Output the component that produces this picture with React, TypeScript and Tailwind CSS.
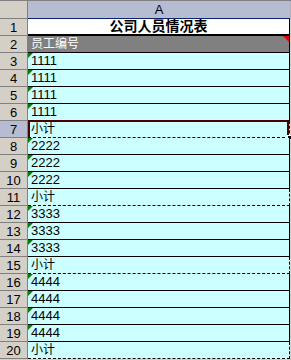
import React from "react";

type Row = { n: number; text: string; kind: "id" | "sub" };

const rows: Row[] = [
  { n: 3, text: "1111", kind: "id" },
  { n: 4, text: "1111", kind: "id" },
  { n: 5, text: "1111", kind: "id" },
  { n: 6, text: "1111", kind: "id" },
  { n: 7, text: "小计", kind: "sub" },
  { n: 8, text: "2222", kind: "id" },
  { n: 9, text: "2222", kind: "id" },
  { n: 10, text: "2222", kind: "id" },
  { n: 11, text: "小计", kind: "sub" },
  { n: 12, text: "3333", kind: "id" },
  { n: 13, text: "3333", kind: "id" },
  { n: 14, text: "3333", kind: "id" },
  { n: 15, text: "小计", kind: "sub" },
  { n: 16, text: "4444", kind: "id" },
  { n: 17, text: "4444", kind: "id" },
  { n: 18, text: "4444", kind: "id" },
  { n: 19, text: "4444", kind: "id" },
  { n: 20, text: "小计", kind: "sub" },
];

const font = { fontFamily: '"Liberation Sans", "Noto Sans CJK SC", sans-serif' };

function RowHead({ n, active }: { n: number; active?: boolean }) {
  return (
    <div
      className={`flex h-[17px] w-[28px] shrink-0 items-center justify-center border-r border-b border-[#808080] text-[13px] leading-none text-black ${
        active ? "bg-[#b6bdd2]" : "bg-[#d4d0c8]"
      }`}
    >
      {n}
    </div>
  );
}

export default function App() {
  return (
    <div className="h-[360px] w-[291px] overflow-hidden bg-[#d4d0c8]" style={font}>
      {/* column header */}
      <div className="flex h-[19px] border-t border-[#808080]">
        <div className="w-[28px] shrink-0 border-r border-b border-[#808080] bg-[#d4d0c8]" />
        <div className="flex w-[262px] items-center justify-center border-b border-[#0a246a] bg-[#b6bdd2] text-[13px] text-black">
          A
        </div>
        <div className="flex-1 bg-[#b0b0b0]" />
      </div>

      {/* row 1 */}
      <div className="flex">
        <RowHead n={1} />
        <div className="flex h-[17px] w-[262px] items-center justify-center border-b-2 border-r border-black bg-white text-[14px] font-bold text-black">
          公司人员情况表
        </div>
      </div>

      {/* row 2 */}
      <div className="flex">
        <RowHead n={2} />
        <div className="relative flex h-[17px] w-[262px] items-center border-b border-r border-black bg-[#808080] pl-[3px] text-[12px] text-white">
          员工编号
          <span className="absolute top-0 right-0 h-0 w-0 border-t-[6px] border-l-[6px] border-t-red-600 border-l-transparent" />
        </div>
      </div>

      {rows.map((r) => {
        const sel = r.n === 7;
        return (
          <div key={r.n} className="flex">
            <RowHead n={r.n} active={sel} />
            <div
              className={`relative flex h-[17px] w-[262px] items-center bg-[#ccffff] pl-[3px] text-black ${
                r.kind === "sub"
                  ? "border-b border-dashed border-r border-r-black border-b-black text-[12px]"
                  : "border-b border-r border-black text-[13px]"
              }`}
            >
              {r.kind === "id" && (
                <span className="absolute top-0 left-0 h-0 w-0 border-t-[5px] border-r-[5px] border-t-[#008000] border-r-transparent" />
              )}
              {r.text}
              {sel && (
                <>
                  <span className="pointer-events-none absolute inset-x-0 top-[-1px] bottom-0 border-2 border-b-0 border-[#4a0000]" />
                  <span className="absolute right-[-3px] bottom-[-3px] h-[5px] w-[5px] border border-white bg-black" />
                </>
              )}
            </div>
          </div>
        );
      })}
    </div>
  );
}
